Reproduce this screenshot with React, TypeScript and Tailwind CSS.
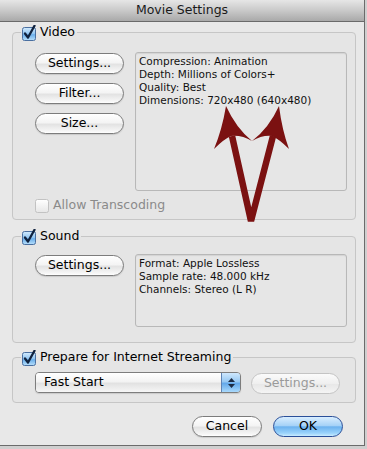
const font = { fontFamily: '"DejaVu Sans", "Lucida Grande", sans-serif' };

function AquaCheck({ on = true, disabled = false }: { on?: boolean; disabled?: boolean }) {
  return (
    <svg width="16" height="16" viewBox="0 0 16 16" className="shrink-0" aria-hidden="true">
      <defs>
        <linearGradient id="cbBlue" x1="0" y1="0" x2="0" y2="1">
          <stop offset="0" stopColor="#d4ebfd" />
          <stop offset="0.5" stopColor="#8ec4f2" />
          <stop offset="0.55" stopColor="#6aaeea" />
          <stop offset="1" stopColor="#b9e0fb" />
        </linearGradient>
        <linearGradient id="cbOff" x1="0" y1="0" x2="0" y2="1">
          <stop offset="0" stopColor="#ffffff" />
          <stop offset="1" stopColor="#e6e6e6" />
        </linearGradient>
      </defs>
      <rect
        x="1.5"
        y="2.5"
        width="13"
        height="13"
        rx="2"
        fill={on ? 'url(#cbBlue)' : 'url(#cbOff)'}
        stroke={disabled ? '#c2c2c2' : on ? '#4a6fa0' : '#8f8f8f'}
      />
      {on && (
        <path d="M4 8.5 L7 12.5 L13.5 0.8" fill="none" stroke="#10223e" strokeWidth="2.3" strokeLinecap="round" strokeLinejoin="round" />
      )}
    </svg>
  );
}

function Pill({ children, w, blue = false, disabled = false }: { children: React.ReactNode; w: string; blue?: boolean; disabled?: boolean }) {
  const base = 'flex h-[21px] items-center justify-center rounded-full border text-[12.5px] leading-none';
  if (blue) {
    return (
      <div className={`${base} ${w} border-[#2a4f99] bg-[linear-gradient(180deg,#d9eeff_0%,#a6d2f7_45%,#6cb2ef_52%,#9ad3fb_85%,#c9ecff_100%)] text-black`}>
        {children}
      </div>
    );
  }
  if (disabled) {
    return (
      <div className={`${base} ${w} border-[#c4c4c4] bg-[linear-gradient(180deg,#fbfbfb_0%,#efefef_50%,#e8e8e8_55%,#f4f4f4_100%)] text-[#9a9a9a]`}>
        {children}
      </div>
    );
  }
  return (
    <div className={`${base} ${w} border-[#7c7c7c] bg-[linear-gradient(180deg,#ffffff_0%,#f4f4f4_45%,#e3e3e3_55%,#f6f6f6_90%,#ffffff_100%)] text-black shadow-[0_1px_1px_rgba(0,0,0,0.12)]`}>
      {children}
    </div>
  );
}

function InfoBox({ lines, h }: { lines: string[]; h: string }) {
  return (
    <div className={`w-[212px] ${h} rounded-[3px] border border-[#b8b8b8] bg-[#e6e6e6] px-[3px] pt-[2px] text-[10.5px] leading-[13px] text-[#111] shadow-[inset_0_1px_1px_rgba(0,0,0,0.08)]`}>
      {lines.map((l) => (
        <div key={l} className="whitespace-nowrap">{l}</div>
      ))}
    </div>
  );
}

function Legend({ label }: { label: string }) {
  return (
    <legend className="ml-[8px] h-[15px] pr-[2px]">
      <span className="flex h-[15px] items-center gap-[3px] text-[12.5px] leading-none text-black">
        <AquaCheck />
        {label}
      </span>
    </legend>
  );
}

export default function App() {
  return (
    <div className="h-[449px] w-[367px] bg-[#cfcfcf]" style={font}>
      <div className="relative h-[446px] w-[365px] border-r border-b border-[#6b6b6b] bg-[#e8e8e8]">
        <div className="flex h-[22px] items-center justify-center border-b border-[#6a6a6a] bg-[linear-gradient(180deg,#e6e6e6_0%,#c9c9c9_50%,#a9a9a9_100%)] text-[12.5px] text-[#1a1a1a]">
          Movie Settings
        </div>

        <div className="pl-[12px]">
          <fieldset className="mt-[3px] h-[195px] w-[344px] rounded-[4px] border border-[#c6c6c6] bg-[#e5e5e5]">
            <Legend label="Video" />
            <div className="flex pt-[12px] pl-[22px]">
              <div className="mt-[1px] flex flex-col gap-[9px]">
                <Pill w="w-[89px]">Settings...</Pill>
                <Pill w="w-[89px]">Filter...</Pill>
                <Pill w="w-[89px]">Size...</Pill>
              </div>
              <div className="ml-[11px]">
                <InfoBox
                  h="h-[139px]"
                  lines={['Compression: Animation', 'Depth: Millions of Colors+', 'Quality: Best', 'Dimensions: 720x480 (640x480)']}
                />
              </div>
            </div>
            <div className="mt-[6px] flex items-center gap-[3px] pl-[21px] text-[12.5px] leading-none text-[#8a8a8a]">
              <AquaCheck on={false} disabled />
              Allow Transcoding
            </div>
          </fieldset>

          <fieldset className="mt-[9px] h-[114px] w-[344px] rounded-[4px] border border-[#c6c6c6] bg-[#e5e5e5]">
            <Legend label="Sound" />
            <div className="flex pt-[10px] pl-[22px]">
              <div className="mt-[1px]">
                <Pill w="w-[89px]">Settings...</Pill>
              </div>
              <div className="ml-[11px]">
                <InfoBox h="h-[73px]" lines={['Format: Apple Lossless', 'Sample rate: 48.000 kHz', 'Channels: Stereo (L R)']} />
              </div>
            </div>
          </fieldset>

          <fieldset className="mt-[7px] h-[53px] w-[344px] rounded-[4px] border border-[#c6c6c6] bg-[#e5e5e5]">
            <Legend label="Prepare for Internet Streaming" />
            <div className="flex items-start pt-[7px] pl-[22px]">
              <div className="flex h-[21px] w-[206px] overflow-hidden rounded-[4px] border border-[#7d7d7d] shadow-[0_1px_1px_rgba(0,0,0,0.12)]">
                <div className="flex flex-1 items-center bg-[linear-gradient(180deg,#ffffff_0%,#f3f3f3_45%,#e2e2e2_55%,#f6f6f6_100%)] pl-[8px] text-[12.5px] leading-none text-black">
                  Fast Start
                </div>
                <div className="flex w-[19px] flex-col items-center justify-center gap-[2px] border-l border-[#5f84b5] bg-[linear-gradient(180deg,#cfe8fd_0%,#98c9f3_45%,#64a9ea_55%,#a9d9fc_100%)]">
                  <svg width="7" height="4" viewBox="0 0 7 4"><path d="M0 4 L3.5 0 L7 4 Z" fill="#1d2c44" /></svg>
                  <svg width="7" height="4" viewBox="0 0 7 4"><path d="M0 0 L3.5 4 L7 0 Z" fill="#1d2c44" /></svg>
                </div>
              </div>
              <div className="ml-[10px] mt-[1px]">
                <Pill w="w-[89px]" disabled>Settings...</Pill>
              </div>
            </div>
          </fieldset>
        </div>

        <div className="mt-[13px] flex justify-end gap-[11px] pr-[21px]">
          <Pill w="w-[70px]">Cancel</Pill>
          <Pill w="w-[70px]" blue>OK</Pill>
        </div>

        {/* annotation arrows drawn over the dialog */}
        <svg className="pointer-events-none absolute top-0 left-0" width="365" height="446" viewBox="0 0 365 446" aria-hidden="true">
          <g fill="#7b1111" stroke="none">
            <path d="M226,106 Q222,130 214,149 Q224,139 231,136 Q242,135 252,141 Q236,128 226,106 Z" />
            <path d="M279,106 Q282,130 289,149 Q279,139 272,136 Q262,135 252,141 Q269,128 279,106 Z" />
          </g>
          <path d="M232,136 L251,221 L273,136" fill="none" stroke="#7b1111" strokeWidth="6.5" strokeLinejoin="miter" />
        </svg>
      </div>
    </div>
  );
}
